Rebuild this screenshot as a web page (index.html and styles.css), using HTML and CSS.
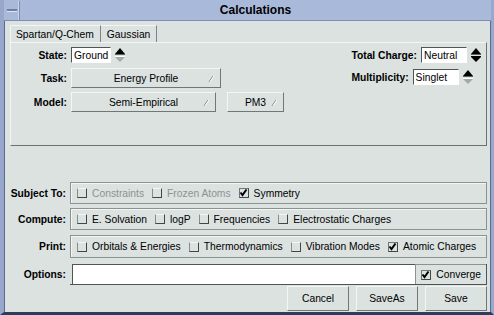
FILE: index.html
```html
<!DOCTYPE html>
<html>
<head>
  <title>Calculations</title>
  <link rel="stylesheet" href="styles.css">
</head>
<body>
  <div class="window">
    <div class="titlebar">
      <span class="min-button"><span class="dash"></span></span>
      <span class="title">Calculations</span>
    </div>

    <div class="content">
      <div class="tabs">
        <span class="tab active">Spartan/Q-Chem</span>
        <span class="tab">Gaussian</span>
      </div>

      <div class="panel">
        <div class="panel-col">
          <div class="field short">
            <span class="label">State:</span>
            <span class="input state-input">Ground</span>
            <svg class="spinner" width="12" height="16" viewBox="0 0 12 16">
              <polygon points="6,1 11,7 1,7" fill="#000"/>
              <line x1="1" y1="7.5" x2="11" y2="7.5" stroke="#59625f"/>
              <line x1="1" y1="9.5" x2="11" y2="9.5" stroke="#fff"/>
              <polygon points="1,10 11,10 6,15" fill="#a3aba9"/>
            </svg>
          </div>
          <div class="field tall">
            <span class="label">Task:</span>
            <span class="option task-option">Energy Profile
              <svg class="mark" width="6" height="8" viewBox="0 0 6 8"><line x1="1" y1="7" x2="5" y2="1" stroke="#7c8583"/><line x1="2" y1="7" x2="6" y2="1" stroke="#fff"/></svg>
            </span>
          </div>
          <div class="field tall">
            <span class="label">Model:</span>
            <span class="option model-option">Semi-Empirical
              <svg class="mark" width="6" height="8" viewBox="0 0 6 8"><line x1="1" y1="7" x2="5" y2="1" stroke="#7c8583"/><line x1="2" y1="7" x2="6" y2="1" stroke="#fff"/></svg>
            </span>
            <span class="option pm3-option">PM3
              <svg class="mark" width="6" height="8" viewBox="0 0 6 8"><line x1="1" y1="7" x2="5" y2="1" stroke="#7c8583"/><line x1="2" y1="7" x2="6" y2="1" stroke="#fff"/></svg>
            </span>
          </div>
        </div>

        <div class="panel-col right">
          <div class="field short">
            <span class="label">Total Charge:</span>
            <span class="input charge-input">Neutral</span>
            <svg class="spinner" width="12" height="16" viewBox="0 0 12 16">
              <polygon points="6,1 11,7 1,7" fill="#000"/>
              <line x1="1" y1="7.5" x2="11" y2="7.5" stroke="#59625f"/>
              <line x1="1" y1="9.5" x2="11" y2="9.5" stroke="#000"/>
              <polygon points="1,10 11,10 6,15" fill="#000"/>
            </svg>
          </div>
          <div class="field short mult">
            <span class="label">Multiplicity:</span>
            <span class="input charge-input">Singlet</span>
            <svg class="spinner" width="12" height="16" viewBox="0 0 12 16">
              <polygon points="6,1 11,7 1,7" fill="#000"/>
              <line x1="1" y1="7.5" x2="11" y2="7.5" stroke="#59625f"/>
              <line x1="1" y1="9.5" x2="11" y2="9.5" stroke="#fff"/>
              <polygon points="1,10 11,10 6,15" fill="#a3aba9"/>
            </svg>
          </div>
        </div>
      </div>

      <div class="rows">
        <div class="row subject">
          <span class="row-label">Subject To:</span>
          <div class="box">
            <span class="check disabled"><span class="tick"></span>Constraints</span>
            <span class="check disabled"><span class="tick"></span>Frozen Atoms</span>
            <span class="check"><span class="tick on"><svg width="9" height="9" viewBox="0 0 9 9"><polyline points="1.5,4.5 3.5,7 7.5,1.5" fill="none" stroke="#000" stroke-width="2"/></svg></span>Symmetry</span>
          </div>
        </div>
        <div class="row compute">
          <span class="row-label">Compute:</span>
          <div class="box">
            <span class="check"><span class="tick"></span>E. Solvation</span>
            <span class="check"><span class="tick"></span>logP</span>
            <span class="check"><span class="tick"></span>Frequencies</span>
            <span class="check"><span class="tick"></span>Electrostatic Charges</span>
          </div>
        </div>
        <div class="row print">
          <span class="row-label">Print:</span>
          <div class="box">
            <span class="check"><span class="tick"></span>Orbitals &amp; Energies</span>
            <span class="check"><span class="tick"></span>Thermodynamics</span>
            <span class="check"><span class="tick"></span>Vibration Modes</span>
            <span class="check"><span class="tick on"><svg width="9" height="9" viewBox="0 0 9 9"><polyline points="1.5,4.5 3.5,7 7.5,1.5" fill="none" stroke="#000" stroke-width="2"/></svg></span>Atomic Charges</span>
          </div>
        </div>
        <div class="row options">
          <span class="row-label">Options:</span>
          <div class="options-box">
            <span class="options-input"></span>
            <span class="check converge"><span class="tick on"><svg width="9" height="9" viewBox="0 0 9 9"><polyline points="1.5,4.5 3.5,7 7.5,1.5" fill="none" stroke="#000" stroke-width="2"/></svg></span>Converge</span>
          </div>
        </div>
      </div>

      <div class="actions">
        <button class="push">Cancel</button>
        <button class="push">SaveAs</button>
        <button class="push">Save</button>
      </div>
    </div>
  </div>
</body>
</html>
```

FILE: styles.css
```css
body {
  margin: 0;
  width: 494px;
  height: 315px;
  overflow: hidden;
  background: #dbe2e0;
  font-family: "Liberation Sans", Arial, sans-serif;
  font-size: 10.3px;
  color: #000;
  white-space: nowrap;
}

.window {
  display: flex;
  flex-direction: column;
  box-sizing: border-box;
  width: 494px;
  height: 315px;
  border-left: 4px solid #97a8cc;
  border-right: 3px solid #97a8cc;
  border-bottom: 3px solid #2f3d5c;
  box-shadow: inset 1px 0 0 #5b6b8e, inset -1px 0 0 #5b6b8e;
}

/* title bar */
.titlebar {
  display: flex;
  align-items: center;
  height: 20px;
  background: #a9b9d9;
  border-bottom: 1px solid #7f8fb0;
}

.min-button {
  display: flex;
  align-items: center;
  justify-content: center;
  width: 15px;
  height: 19px;
  border-right: 1px solid #7f8fb0;
  box-shadow: inset -1px 0 0 #c9d4ea;
}

.min-button .dash {
  width: 10px;
  height: 2px;
  background: #6f7fa0;
  border-bottom: 1px solid #e1e7f3;
}

.title {
  flex: 1;
  text-align: center;
  font-weight: bold;
  font-size: 12px;
}

.content {
  flex: 1;
  display: flex;
  flex-direction: column;
  padding: 0 4px 0 6px;
}

/* tabs */
.tabs {
  display: flex;
  height: 17px;
  margin-top: 4px;
}

.tab {
  display: flex;
  align-items: center;
  padding: 0 6px;
  border-right: 1px solid #7c8583;
  border-top: 1px solid #f3f6f5;
}

.tab.active {
  border-left: 1px solid #f3f6f5;
  padding-left: 5px;
}

/* main panel */
.panel {
  display: flex;
  justify-content: space-between;
  height: 98px;
  border: 1px solid #f3f6f5;
  border-right-color: #68726f;
  border-bottom-color: #68726f;
  padding: 4px 4px 0 0;
}

.panel-col {
  display: flex;
  flex-direction: column;
}

.field {
  display: flex;
  align-items: center;
  gap: 4px;
}

.field .label {
  width: 56px;
  text-align: right;
  font-weight: bold;
}

.panel-col.right .label {
  width: auto;
}

.field.short {
  height: 16px;
  margin-bottom: 5px;
}

.field.tall {
  height: 20px;
  margin-bottom: 4px;
}

.field.mult {
  margin-top: 1px;
}

.input {
  display: flex;
  align-items: center;
  box-sizing: border-box;
  height: 16px;
  padding-left: 2px;
  background: #fff;
  border: 1px solid #fff;
  border-top-color: #4d5654;
  border-left-color: #4d5654;
}

.state-input {
  width: 40px;
}

.charge-input {
  width: 46px;
}

.spinner {
  margin-left: -1px;
}

.option {
  display: flex;
  align-items: center;
  justify-content: center;
  position: relative;
  box-sizing: border-box;
  height: 20px;
  border: 1px solid #f3f6f5;
  border-right-color: #6f7876;
  border-bottom-color: #6f7876;
}

.option .mark {
  position: absolute;
  right: 6px;
  top: 6px;
}

.task-option {
  width: 150px;
}

.model-option {
  width: 145px;
}

.pm3-option {
  width: 57px;
  margin-left: 7px;
}

/* lower rows */
.rows {
  display: flex;
  flex-direction: column;
  margin-top: 36px;
}

.row {
  display: flex;
  align-items: center;
  gap: 4px;
  height: 22px;
}

.row.compute {
  margin-top: 4px;
}

.row.print {
  margin-top: 5px;
  height: 23px;
}

.row.options {
  margin-top: 6px;
  height: 21px;
}

.row-label {
  width: 56px;
  text-align: right;
  font-weight: bold;
}

.box {
  flex: 1;
  display: flex;
  align-items: center;
  gap: 8px;
  box-sizing: border-box;
  height: 100%;
  padding-left: 6px;
  border: 1px solid #8a9391;
  box-shadow: inset 1px 1px 0 #f3f6f5;
}

.check {
  display: flex;
  align-items: center;
  gap: 5px;
}

.check.disabled {
  color: #8b9391;
}

.tick {
  display: flex;
  box-sizing: border-box;
  width: 10px;
  height: 10px;
  border: 1px solid #f3f6f5;
  border-left-color: #858e8c;
  border-bottom-color: #3f4846;
  border-right-color: #3f4846;
}

.tick.on {
  border-color: #3f4846;
  border-top-color: #6f7876;
  border-left-color: #6f7876;
}

.tick.on svg {
  margin: -1px 0 0 -1px;
}

.options-box {
  flex: 1;
  display: flex;
  align-items: center;
  box-sizing: border-box;
  height: 100%;
  border-bottom: 1px solid #4d5654;
  border-right: 1px solid #4d5654;
}

.options-input {
  flex: 1;
  align-self: stretch;
  background: #fff;
  margin-left: 2px;
  border-top: 1px solid #4d5654;
  border-left: 1px solid #4d5654;
}

.converge {
  padding: 0 5px;
  align-self: stretch;
  border-top: 1px solid #8a9391;
  border-left: 1px solid #8a9391;
}

/* buttons */
.actions {
  display: flex;
  justify-content: flex-end;
  gap: 7px;
  margin-top: 1px;
}

.push {
  width: 62px;
  height: 25px;
  margin: 0;
  padding: 0;
  font-family: inherit;
  font-size: 10.3px;
  color: #000;
  background: #dbe2e0;
  border: 1px solid #f3f6f5;
  border-right-color: #6f7876;
  border-bottom-color: #6f7876;
}
```
